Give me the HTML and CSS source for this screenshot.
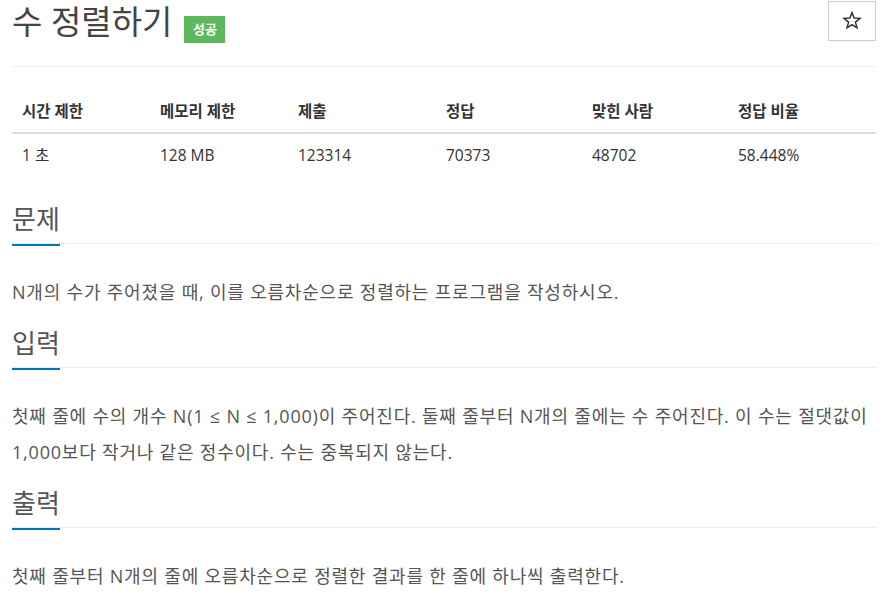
FILE: index.html
```html
<!DOCTYPE html>
<html>
<head>
    <title>수 정렬하기</title>
    <link rel="stylesheet" href="styles.css">
</head>
<body>
    <div class="container">
        <div class="page-header">
            <h1>수 정렬하기 <span class="label-success">성공</span></h1>
            <button class="star-btn" title="즐겨찾기">
                <svg width="20" height="20" viewBox="0 0 20 20">
                    <polygon points="10,1.5 12.12,7.09 18.08,7.37 13.42,11.11 15,16.88 10,13.6 5,16.88 6.58,11.11 1.92,7.37 7.88,7.09" fill="none" stroke="#333" stroke-width="1.5" stroke-linejoin="miter"/>
                </svg>
            </button>
        </div>

        <div class="info-table">
            <div class="cell head">시간 제한</div>
            <div class="cell head">메모리 제한</div>
            <div class="cell head">제출</div>
            <div class="cell head">정답</div>
            <div class="cell head">맞힌 사람</div>
            <div class="cell head">정답 비율</div>
            <div class="cell">1 초</div>
            <div class="cell">128 MB</div>
            <div class="cell">123314</div>
            <div class="cell">70373</div>
            <div class="cell">48702</div>
            <div class="cell">58.448%</div>
        </div>

        <section class="problem-section">
            <div class="headline"><h2><span>문제</span></h2></div>
            <div class="problem-text">
                <p>N개의 수가 주어졌을 때, 이를 오름차순으로 정렬하는 프로그램을 작성하시오.</p>
            </div>
        </section>

        <section class="problem-section">
            <div class="headline"><h2><span>입력</span></h2></div>
            <div class="problem-text">
                <p>첫째 줄에 수의 개수 N(1 ≤ N ≤ 1,000)이 주어진다. 둘째 줄부터 N개의 줄에는 수 주어진다. 이 수는 절댓값이 1,000보다 작거나 같은 정수이다. 수는 중복되지 않는다.</p>
            </div>
        </section>

        <section class="problem-section">
            <div class="headline"><h2><span>출력</span></h2></div>
            <div class="problem-text">
                <p>첫째 줄부터 N개의 줄에 오름차순으로 정렬한 결과를 한 줄에 하나씩 출력한다.</p>
            </div>
        </section>
    </div>
</body>
</html>
```

FILE: styles.css
```css
body {
    margin: 0;
    background: #fff;
    color: #555;
    font-family: "Open Sans", "Noto Sans CJK KR", sans-serif;
    font-size: 14px;
}
.container {
    padding: 0 13px 0 12px;
}
.page-header {
    display: flex;
    justify-content: space-between;
    align-items: flex-start;
    border-bottom: 1px solid #eee;
    height: 66px;
}
.page-header h1 {
    margin: 0;
    padding-top: 2px;
    font-size: 33px;
    font-weight: 400;
    line-height: 40px;
    color: #444;
}
.label-success {
    display: inline-block;
    vertical-align: 0;
    margin-left: 3px;
    background: #5cb85c;
    color: #fff;
    font-size: 13px;
    font-weight: 700;
    line-height: 27px;
    padding: 0 8px 0 9px;
}
.star-btn {
    display: flex;
    align-items: center;
    justify-content: center;
    margin-top: 1px;
    width: 48px;
    height: 40px;
    background: #fff;
    border: 1px solid #ccc;
    padding: 0;
}
.info-table {
    display: grid;
    grid-template-columns: 138px 138px 148px 146px 146px 1fr;
    margin-top: 23px;
}
.cell {
    padding: 0 10px;
    line-height: 42px;
    color: #333;
    font-size: 15.5px;
}
.cell.head {
    font-weight: 700;
    border-bottom: 2px solid #ddd;
    line-height: 42px;
}
.problem-section {
    margin-top: 17px;
}
.info-table + .problem-section {
    margin-top: 27px;
}
.headline h2 {
    margin: 0;
    padding: 0;
    border-bottom: 1px dotted #ddd;
    font-size: 26px;
    font-weight: 400;
    line-height: 32px;
    color: #555;
}
.headline h2 span {
    display: inline-block;
    padding-bottom: 9px;
    border-bottom: 2px solid #0076c0;
    margin-bottom: -3px;
}
.problem-text p {
    margin: 0;
    padding: 30px 0 0;
    font-size: 18px;
    letter-spacing: 0.8px;
    line-height: 36px;
    color: #555;
}
```
